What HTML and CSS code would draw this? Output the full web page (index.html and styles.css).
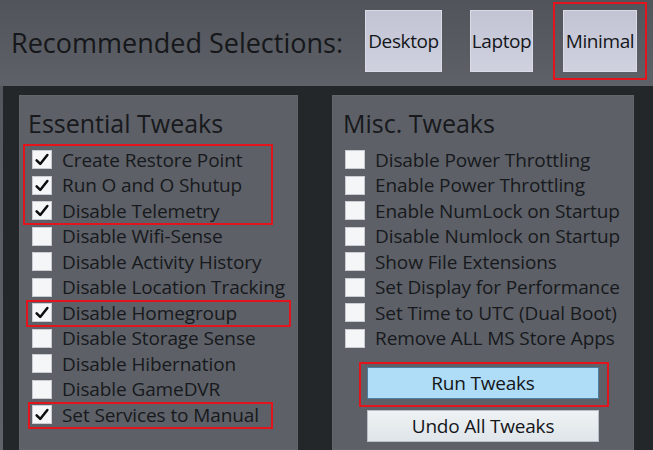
FILE: index.html
```html
<!DOCTYPE html>
<html>
<head>
<meta charset="utf-8">
<link rel="stylesheet" href="styles.css">
</head>
<body>
<div class="page">
  <header class="top">
    <div class="rec-label">Recommended Selections:</div>
    <div class="presets">
      <button class="preset preset-desktop">Desktop</button>
      <button class="preset preset-laptop">Laptop</button>
      <button class="preset preset-minimal">Minimal</button>
    </div>
  </header>
  <main class="frame">
    <section class="panel panel-left">
      <h2 class="panel-title">Essential Tweaks</h2>
      <ul class="list">
        <li class="row"><span class="box checked"><svg viewBox="0 0 20 19"><path d="M4 10.5 L8 14.5 L16 4.5" /></svg></span>Create Restore Point</li>
        <li class="row"><span class="box checked"><svg viewBox="0 0 20 19"><path d="M4 10.5 L8 14.5 L16 4.5" /></svg></span>Run O and O Shutup</li>
        <li class="row"><span class="box checked"><svg viewBox="0 0 20 19"><path d="M4 10.5 L8 14.5 L16 4.5" /></svg></span>Disable Telemetry</li>
        <li class="row"><span class="box"></span>Disable Wifi-Sense</li>
        <li class="row"><span class="box"></span>Disable Activity History</li>
        <li class="row"><span class="box"></span>Disable Location Tracking</li>
        <li class="row"><span class="box checked"><svg viewBox="0 0 20 19"><path d="M4 10.5 L8 14.5 L16 4.5" /></svg></span>Disable Homegroup</li>
        <li class="row"><span class="box"></span>Disable Storage Sense</li>
        <li class="row"><span class="box"></span>Disable Hibernation</li>
        <li class="row"><span class="box"></span>Disable GameDVR</li>
        <li class="row"><span class="box checked"><svg viewBox="0 0 20 19"><path d="M4 10.5 L8 14.5 L16 4.5" /></svg></span>Set Services to Manual</li>
      </ul>
    </section>
    <section class="panel panel-right">
      <h2 class="panel-title">Misc. Tweaks</h2>
      <ul class="list">
        <li class="row"><span class="box"></span>Disable Power Throttling</li>
        <li class="row"><span class="box"></span>Enable Power Throttling</li>
        <li class="row"><span class="box"></span>Enable NumLock on Startup</li>
        <li class="row"><span class="box"></span>Disable Numlock on Startup</li>
        <li class="row"><span class="box"></span>Show File Extensions</li>
        <li class="row"><span class="box"></span>Set Display for Performance</li>
        <li class="row"><span class="box"></span>Set Time to UTC (Dual Boot)</li>
        <li class="row"><span class="box"></span>Remove ALL MS Store Apps</li>
      </ul>
      <div class="actions">
        <button class="act act-run">Run Tweaks</button>
        <button class="act act-undo">Undo All Tweaks</button>
      </div>
    </section>
  </main>
  <div class="mark mark-minimal"></div>
  <div class="mark mark-group1"></div>
  <div class="mark mark-homegroup"></div>
  <div class="mark mark-services"></div>
  <div class="mark mark-run"></div>
</div>
</body>
</html>
```
FILE: styles.css
```css
html, body {
  margin: 0;
  padding: 0;
  width: 653px;
  height: 450px;
  overflow: hidden;
}
body {
  background: linear-gradient(180deg, #51545b 0%, #5f6268 100%);
  font-family: "Open Sans", "Noto Sans", sans-serif;
  color: #17191c;
}
.page {
  position: relative;
  width: 653px;
  height: 450px;
}
.top {
  height: 86px;
  display: flex;
  align-items: flex-start;
  background: linear-gradient(180deg, #51545a 0%, #5e6167 100%);
}
.rec-label {
  font-size: 27px;
  letter-spacing: 0;
  margin: 24px 0 0 11px;
  width: 354px;
  white-space: nowrap;
  color: #15171a;
}
.presets {
  display: flex;
  margin-top: 10px;
}
.preset {
  height: 62px;
  border: 1px solid #dadbe6;
  background: linear-gradient(180deg, #c2c4d4 0%, #cfd1df 100%);
  font-family: "Open Sans", sans-serif;
  font-size: 19px;
  letter-spacing: -0.4px;
  color: #14161a;
  padding: 0;
  white-space: nowrap;
  overflow: visible;
}
.preset-desktop { width: 77px; }
.preset-laptop { width: 63px; margin-left: 28px; }
.preset-minimal { width: 74px; margin-left: 30px; }

.frame {
  margin-left: 3px;
  height: 364px;
  background: #24272a;
  display: flex;
  padding: 9px 19px 0 16px;
  gap: 34px;
  box-sizing: border-box;
}
.panel {
  background: #5d6067;
  box-shadow: inset 0 0 0 1px #62656b;
  box-sizing: border-box;
}
.panel-left { width: 279px; padding-left: 13px; }
.panel-right { width: 302px; padding-left: 13px; }
.panel-title {
  margin: 11px 0 0 -4px;
  font-weight: normal;
  font-size: 25px;
  letter-spacing: 0;
  line-height: 34px;
  height: 41px;
  white-space: nowrap;
}
.panel-right .panel-title { margin-left: -2px; }
.list {
  list-style: none;
  margin: 0;
  padding: 0;
}
.row {
  height: 25.5px;
  display: flex;
  align-items: center;
  font-size: 19px;
  letter-spacing: -0.1px;
  white-space: nowrap;
}
.box {
  width: 18px;
  height: 17px;
  background: #f5f6f8;
  border: 1px solid #c9ccd2;
  margin-right: 10px;
  flex: none;
  display: flex;
}
.box svg {
  width: 18px;
  height: 17px;
}
.box svg path {
  fill: none;
  stroke: #0c0d0f;
  stroke-width: 2.8;
  stroke-linecap: round;
  stroke-linejoin: round;
}
.actions {
  display: flex;
  flex-direction: column;
  align-items: center;
  gap: 11px;
  margin: 16px 0 0 -13px;
}
.act {
  width: 232px;
  height: 32px;
  font-family: "Open Sans", sans-serif;
  font-size: 19px;
  letter-spacing: -0.2px;
  color: #14161a;
  padding: 0;
}
.act-run {
  background: #afdcf6;
  border: 1px solid #4d7ea0;
}
.act-undo {
  background: linear-gradient(180deg, #eef2f4 0%, #dfe5ea 100%);
  border: 1px solid #b8bfc6;
}
.mark {
  position: absolute;
  border: 2px solid #e3141b;
  box-sizing: border-box;
}
.mark-minimal { left: 553px; top: 2px; width: 94px; height: 78px; }
.mark-group1 { left: 23px; top: 144px; width: 250px; height: 81px; }
.mark-homegroup { left: 26px; top: 300px; width: 265px; height: 27px; }
.mark-services { left: 28px; top: 402px; width: 245px; height: 27px; }
.mark-run { left: 359px; top: 362px; width: 250px; height: 45px; }
```
